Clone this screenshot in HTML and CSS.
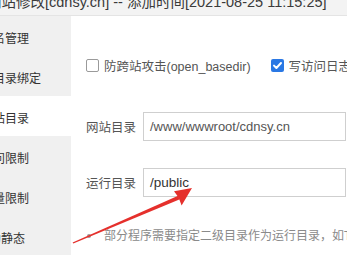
FILE: index.html
```html
<!DOCTYPE html>
<html lang="zh-CN">
<head>
<meta charset="utf-8">
<title>网站修改</title>
<link rel="stylesheet" href="styles.css">
</head>
<body>
<div class="dialog">
  <div class="title"><span class="title-text">网站修改[cdnsy.cn] -- 添加时间[2021-08-25 11:15:25]</span></div>
  <div class="body">
    <ul class="menu">
      <li>域名管理</li>
      <li>子目录绑定</li>
      <li class="on">网站目录</li>
      <li>访问限制</li>
      <li>流量限制</li>
      <li class="short">伪静态</li>
    </ul>
    <div class="content">
      <div class="checks">
        <label class="check"><span class="box"></span>防跨站攻击(open_basedir)</label>
        <label class="check"><span class="box on"><svg viewBox="0 0 13 13" width="13" height="13"><polyline points="3,6.6 5.4,9 10,4" fill="none" stroke="#fff" stroke-width="2" stroke-linecap="round" stroke-linejoin="round"/></svg></span>写访问日志</label>
      </div>
      <div class="field first"><span class="label">网站目录</span><div class="input">/www/wwwroot/cdnsy.cn</div></div>
      <div class="field"><span class="label">运行目录</span><div class="input dark">/public</div></div>
      <ul class="help"><li>部分程序需要指定二级目录作为运行目录，如ThinkPHP5，Laravel</li></ul>
    </div>
  </div>
</div>
<svg class="arrow" viewBox="0 0 347 255" width="347" height="255">
  <polygon points="72.6,242.4 73.3,243.6 179.9,199.3 178.1,195.7" fill="#e5302c"/>
  <polygon points="192,188 174,191.3 178.6,197.4 181.6,205.4" fill="#e5302c"/>
</svg>
</body>
</html>
```

FILE: styles.css
```css
html, body {
  margin: 0;
  padding: 0;
}
body {
  width: 347px;
  height: 255px;
  overflow: hidden;
  position: relative;
  background: #fff;
  font-family: "Liberation Sans", "Noto Sans CJK SC", sans-serif;
  color: #333;
}
.dialog {
  margin-left: -31px;
  width: 378px;
}
.title {
  height: 15px;
  border-bottom: 1px solid #e4e4e4;
  background: #f3f3f3;
  padding-left: 18px;
  overflow: hidden;
  white-space: nowrap;
  font-size: 14.5px;
  line-height: 15px;
  color: #3a3a3a;
}
.title-text {
  display: block;
  margin-top: -5px;
}
.body {
  display: flex;
  height: 239px;
}
.menu {
  flex: none;
  width: 102px;
  margin: 0;
  padding: 0;
  list-style: none;
  background: #f0f0f0;
}
.menu li {
  height: 40px;
  box-sizing: border-box;
  padding: 3px 0 0 12px;
  display: flex;
  align-items: center;
  font-size: 12px;
  color: #333;
  white-space: nowrap;
}
.menu li.on {
  background: #fff;
}
.menu li.short {
  padding-left: 20px;
}
.content {
  flex: 1;
  min-width: 0;
  padding: 39px 0 0 15px;
  white-space: nowrap;
}
.checks {
  display: flex;
  align-items: center;
  gap: 20px;
  height: 20px;
  font-size: 12.5px;
  color: #555;
  margin-bottom: 37px;
}
.check {
  display: flex;
  align-items: center;
  gap: 5px;
}
.box {
  width: 13px;
  height: 13px;
  box-sizing: border-box;
  border: 1px solid #9a9a9a;
  border-radius: 2px;
  background: #fff;
  display: block;
}
.box.on {
  border: none;
  background: #2a78e4;
}
.box svg {
  display: block;
}
.field {
  display: flex;
  align-items: center;
  height: 29px;
}
.field.first {
  margin-bottom: 27px;
}
.label {
  width: 57px;
  flex: none;
  font-size: 12.5px;
  color: #555;
}
.input {
  width: 203px;
  height: 29px;
  box-sizing: border-box;
  border: 1px solid #cfcfcf;
  padding-left: 6px;
  font-size: 13px;
  line-height: 27px;
  color: #555;
}
.input.dark {
  color: #333;
  font-size: 13.5px;
}
.help {
  margin: 29px 0 0;
  padding: 0 0 0 1px;
  list-style: none;
  font-size: 12px;
  line-height: 20px;
  color: #8a8a8a;
}
.help li {
  display: flex;
  align-items: center;
}
.help li::before {
  content: "";
  width: 4px;
  height: 4px;
  border-radius: 50%;
  background: #999;
  margin-right: 13px;
  flex: none;
}
.arrow {
  position: absolute;
  left: 0;
  top: 0;
  pointer-events: none;
}
```
